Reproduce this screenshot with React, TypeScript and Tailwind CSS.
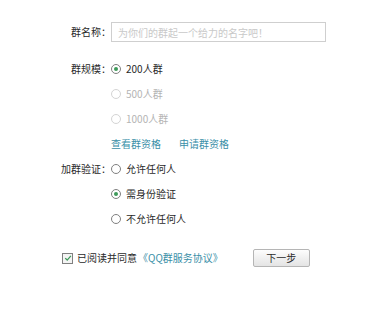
import { useState } from 'react';

const font = { fontFamily: '"Noto Sans CJK SC", "Liberation Sans", sans-serif' };

function Radio({ checked, disabled }: { checked?: boolean; disabled?: boolean }) {
  return (
    <span
      className={`flex h-[10px] w-[10px] items-center justify-center rounded-full border bg-white ${
        disabled ? 'border-[#d4d4d4]' : 'border-[#808080]'
      }`}
    >
      {checked ? <span className="h-[4px] w-[4px] rounded-full bg-[#3e9a5a]" /> : null}
    </span>
  );
}

interface OptionProps {
  label: string;
  checked?: boolean;
  disabled?: boolean;
  onClick?: () => void;
}

function Option({ label, checked, disabled, onClick }: OptionProps) {
  return (
    <button type="button" onClick={onClick} className="flex items-center gap-[5px]">
      <Radio checked={checked} disabled={disabled} />
      <span className={disabled ? 'text-[#b4b4b4]' : 'text-[#2a2a2a]'}>{label}</span>
    </button>
  );
}

function Row({ label, children }: { label?: string; children: React.ReactNode }) {
  return (
    <div className="flex h-[25px] items-center">
      <div className="w-[111px] shrink-0 text-right text-[#2a2a2a]">{label}</div>
      <div className="flex items-center">{children}</div>
    </div>
  );
}

export default function App() {
  const [size, setSize] = useState('200');
  const [verify, setVerify] = useState('need');
  const [agreed, setAgreed] = useState(true);

  return (
    <div className="h-[331px] w-[388px] bg-white pt-[22px] text-[10px] leading-none" style={font}>
      <div className="flex h-[20px] items-center">
        <div className="w-[111px] shrink-0 text-right text-[#2a2a2a]">群名称：</div>
        <input
          className="h-[20px] w-[215px] border border-[#cfcfcf] px-[6px] text-[10px] text-[#333] outline-none placeholder:text-[#c9c9c9]"
          placeholder="为你们的群起一个给力的名字吧！"
        />
      </div>

      <div className="mt-[14px]">
        <Row label="群规模：">
          <Option label="200人群" checked={size === '200'} onClick={() => setSize('200')} />
        </Row>
        <Row>
          <Option label="500人群" disabled />
        </Row>
        <Row>
          <Option label="1000人群" disabled />
        </Row>
        <Row>
          <div className="flex gap-[18px] text-[#3b8fa8]">
            <a href="#">查看群资格</a>
            <a href="#">申请群资格</a>
          </div>
        </Row>
        <Row label="加群验证：">
          <Option label="允许任何人" checked={verify === 'any'} onClick={() => setVerify('any')} />
        </Row>
        <Row>
          <Option label="需身份验证" checked={verify === 'need'} onClick={() => setVerify('need')} />
        </Row>
        <Row>
          <Option label="不允许任何人" checked={verify === 'none'} onClick={() => setVerify('none')} />
        </Row>
      </div>

      <div className="mt-[18px] flex h-[18px] items-center pl-[62px]">
        <button
          type="button"
          onClick={() => setAgreed(!agreed)}
          className="flex h-[11px] w-[11px] items-center justify-center border border-[#808080] bg-[#f4f4f4]"
        >
          {agreed ? (
            <svg viewBox="0 0 10 10" className="h-[8px] w-[8px]">
              <path d="M1.5 5.2 L4 7.6 L8.6 2.4" fill="none" stroke="#3e9a5a" strokeWidth="1.6" />
            </svg>
          ) : null}
        </button>
        <span className="ml-[4px] text-[#2a2a2a]">已阅读并同意</span>
        <a href="#" className="ml-[1px] text-[#3b8fa8]">《QQ群服务协议》</a>
        <button
          type="button"
          className="ml-[30px] h-[18px] w-[57px] rounded-[2px] border border-[#b5b5b5] bg-gradient-to-b from-[#fdfdfd] to-[#e4e4e4] text-[10px] text-[#2a2a2a]"
        >
          下一步
        </button>
      </div>
    </div>
  );
}
